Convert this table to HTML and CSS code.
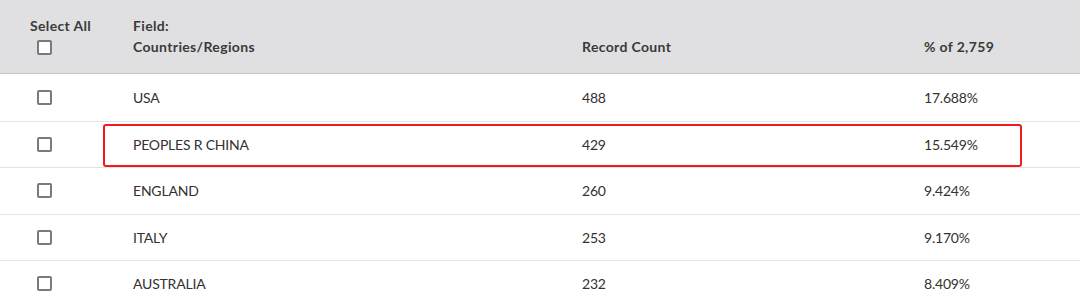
FILE: index.html
```html
<!DOCTYPE html>
<html>
<head>
<meta charset="utf-8">
<link rel="stylesheet" href="styles.css">
</head>
<body>
<div class="table">
  <div class="row head">
    <div class="cell sel">
      <span class="sel-label">Select All</span>
      <span class="box"></span>
    </div>
    <div class="cell">Field:<br>Countries/Regions</div>
    <div class="cell bottom">Record Count</div>
    <div class="cell bottom">% of 2,759</div>
  </div>
  <div class="row">
    <div class="cell sel"><span class="box"></span></div>
    <div class="cell">USA</div>
    <div class="cell">488</div>
    <div class="cell">17.688%</div>
  </div>
  <div class="row marked">
    <div class="cell sel"><span class="box"></span></div>
    <div class="cell">PEOPLES R CHINA</div>
    <div class="cell">429</div>
    <div class="cell">15.549%</div>
  </div>
  <div class="row">
    <div class="cell sel"><span class="box"></span></div>
    <div class="cell">ENGLAND</div>
    <div class="cell">260</div>
    <div class="cell">9.424%</div>
  </div>
  <div class="row">
    <div class="cell sel"><span class="box"></span></div>
    <div class="cell">ITALY</div>
    <div class="cell">253</div>
    <div class="cell">9.170%</div>
  </div>
  <div class="row">
    <div class="cell sel"><span class="box"></span></div>
    <div class="cell">AUSTRALIA</div>
    <div class="cell">232</div>
    <div class="cell">8.409%</div>
  </div>
</div>
</body>
</html>
```
FILE: styles.css
```css
html, body {
  margin: 0;
  padding: 0;
  background: #ffffff;
}
body {
  font-family: Lato, "Open Sans", "Liberation Sans", sans-serif;
  font-size: 14px;
  letter-spacing: -0.2px;
  color: #333131;
}
.table {
  width: 1080px;
}
.row {
  display: grid;
  grid-template-columns: 133px 449px 342px 1fr;
  height: 46.5px;
  box-sizing: border-box;
  align-items: center;
  border-top: 1px solid #e4e4e6;
  position: relative;
}
.row.head {
  height: 74px;
  background: #e0e0e3;
  border-top: none;
  border-bottom: 1px solid #c6c6c9;
  align-items: start;
  padding-top: 15px;
  font-weight: 700;
  letter-spacing: 0.35px;
  line-height: 21px;
  color: #3a3a3a;
}
.row.head + .row {
  border-top: none;
}
.cell.bottom {
  padding-top: 21px;
}
.cell.sel {
  padding-left: 30px;
  display: flex;
  flex-direction: column;
  align-items: flex-start;
}
.sel-label {
  line-height: 21px;
}
.box {
  display: block;
  width: 15px;
  height: 15px;
  box-sizing: border-box;
  border: 2px solid #7a7a7a;
  border-radius: 2px;
  margin-left: 7px;
  background: #fff;
}
.head .box {
  margin-top: 4px;
}
.row.marked::after {
  content: "";
  position: absolute;
  left: 103px;
  top: 2px;
  width: 919px;
  height: 43px;
  box-sizing: border-box;
  border: 2.5px solid #f01c1c;
  border-radius: 3px;
  pointer-events: none;
}
```
